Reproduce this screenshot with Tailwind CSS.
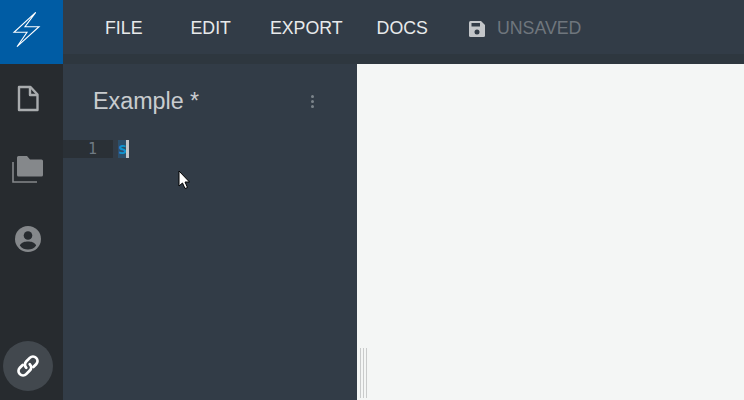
<!DOCTYPE html>
<html lang="en">
<head>
    <meta charset="UTF-8">
    <meta name="viewport" content="width=device-width, initial-scale=1.0">
    <title>Editor</title>
    <script src="https://cdn.jsdelivr.net/npm/@tailwindcss/browser@4"></script>
</head>
<body class="bg-[#f4f6f5] font-['Liberation_Sans',sans-serif] overflow-hidden">
<div class="relative flex h-[400px] w-[744px]">

    <!-- Icon rail -->
    <div class="flex w-[63px] shrink-0 flex-col bg-[#272b2f]">
        <div class="h-[64px] w-full bg-[#005ca4]">
            <svg width="63" height="64" viewBox="0 0 63 64" fill="none" stroke="#fff" stroke-width="1.1">
                <path d="M35.700 12.300 L14 32.300 H27 L17 46.700 L39 26.700 H25 Z"/>
            </svg>
        </div>
        <div class="flex min-h-0 flex-1 flex-col items-center pr-[7px]">
            <svg class="mt-[21px]" width="24" height="27" viewBox="0 0 24 27" fill="none" stroke="#a9acae" stroke-width="2.400" stroke-linejoin="round">
                <path d="M3 2 H14.500 L21.500 9.500 V25 H3 Z"/>
                <path d="M14 2 V10 H21.500"/>
            </svg>
            <svg class="mt-[44px]" width="32" height="27" viewBox="0 0 32 27">
                <path d="M5 1.500 Q5 0 6.500 0 H15 L18 3.500 H29.500 Q31 3.500 31 5 V19 Q31 20.500 29.500 20.500 H6.500 Q5 20.500 5 19 Z" fill="#85888b"/>
                <path d="M1 6 V26 H25" fill="none" stroke="#85888b" stroke-width="1.600"/>
            </svg>
            <svg class="mt-[43px]" width="26" height="26" viewBox="0 0 26 26">
                <circle cx="13" cy="13" r="13" fill="#85888b"/>
                <circle cx="13" cy="9.500" r="4.300" fill="#272b2f"/>
                <path d="M4.800 19.500 C6.500 16 10 15.500 13 15.500 C16 15.500 19.500 16 21.200 19.500 C19 22.500 16 23.500 13 23.500 C10 23.500 7 22.500 4.800 19.500 Z" fill="#272b2f"/>
            </svg>
            <div class="mt-auto mb-[9px] flex h-[50px] w-[50px] items-center justify-center rounded-full bg-[#42484e]">
                <svg width="26" height="26" viewBox="0 0 26 26" fill="none" stroke="#fff" stroke-width="2.800" stroke-linecap="round">
                    <g transform="rotate(-45 13 13)">
                        <path d="M10 8.500 H6 a4.500 4.500 0 0 0 0 9 H11 a4.500 4.500 0 0 0 4.500-4.500"/>
                        <path d="M16 17.500 H20 a4.500 4.500 0 0 0 0-9 H15 a4.500 4.500 0 0 0 -4.500 4.500"/>
                    </g>
                </svg>
            </div>
        </div>
    </div>

    <div class="flex min-w-0 flex-1 flex-col">
        <!-- Top bar -->
        <div class="h-[64px] shrink-0 bg-[#323c47]">
            <div class="flex h-[54px] items-center pt-[3px] text-[17.750px] text-[#e8eaeb]">
                <span class="ml-[42px]">FILE</span>
                <span class="ml-[48px]">EDIT</span>
                <span class="ml-[39px]">EXPORT</span>
                <span class="ml-[34px]">DOCS</span>
                <svg class="ml-[41px]" width="16" height="16" viewBox="0 0 16 16">
                    <path d="M1.500 0 H12 L16 4 V14.500 Q16 16 14.500 16 H1.500 Q0 16 0 14.500 V1.500 Q0 0 1.500 0 Z" fill="#c3c6c9"/>
                    <rect x="2.500" y="2" width="8.500" height="3.500" fill="#323c47"/>
                    <circle cx="8" cy="11" r="2.500" fill="#323c47"/>
                </svg>
                <span class="ml-[12px] text-[#6f767d]">UNSAVED</span>
            </div>
            <div class="h-[10px] bg-[#2e373f]"></div>
        </div>

        <div class="flex min-h-0 flex-1">
            <!-- Code panel -->
            <div class="w-[294px] shrink-0 bg-[#323c47]">
                <div class="flex h-[76px] items-start justify-between pt-[22px] pl-[30px] pr-[43px]">
                    <span class="text-[23.300px] leading-[30px] text-[#c9cccf]">Example *</span>
                    <div class="mt-[9px] flex flex-col gap-[2px]">
                        <span class="h-[3px] w-[3px] rounded-full bg-[#7c848b]"></span>
                        <span class="h-[3px] w-[3px] rounded-full bg-[#7c848b]"></span>
                        <span class="h-[3px] w-[3px] rounded-full bg-[#7c848b]"></span>
                    </div>
                </div>
                <div class="flex h-[18px] font-['DejaVu_Sans_Mono',monospace] text-[15px] leading-[18px]">
                    <div class="w-[50px] bg-[#2a3036] pr-[16px] text-right text-[#6f7a83]">1</div>
                    <div class="ml-[5px] w-[8px] bg-[#2c4f6b] text-center text-[16px] font-bold text-[#0f94d2]">s</div>
                    <div class="w-[3px] bg-[#c3c6c9]"></div>
                </div>
            </div>

            <!-- Preview -->
            <div class="flex min-w-0 flex-1 items-end bg-[#f4f6f5] pb-[2px] pl-[3px]">
                <div class="flex h-[50px] gap-[2px]">
                    <span class="w-[1px] bg-[#c9cbcb]"></span>
                    <span class="w-[1px] bg-[#c9cbcb]"></span>
                    <span class="w-[1px] bg-[#c9cbcb]"></span>
                </div>
            </div>
        </div>
    </div>

    <!-- Mouse pointer -->
    <svg class="absolute left-[178px] top-[170px]" width="13" height="20" viewBox="0 0 13 20">
        <path d="M1 1 V16 L4.500 13 L7 18.500 L9.500 17.500 L7 12 H11.500 Z" fill="#fff" stroke="#000" stroke-width="1"/>
    </svg>
</div>
</body>
</html>
